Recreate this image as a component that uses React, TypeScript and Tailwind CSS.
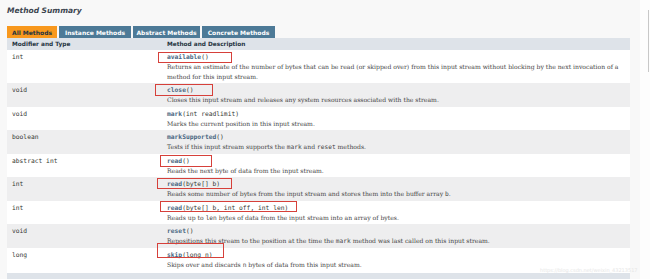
import React from "react";

type Part = string | { c: string };
type Row = { type: string; name: string; params: string; desc: Part[][] };

const rows: Row[] = [
  {
    type: "int",
    name: "available",
    params: "()",
    desc: [
      [
        "Returns an estimate of the number of bytes that can be read (or skipped over) from this input stream without blocking by the next invocation of a",
      ],
      ["method for this input stream."],
    ],
  },
  {
    type: "void",
    name: "close",
    params: "()",
    desc: [["Closes this input stream and releases any system resources associated with the stream."]],
  },
  {
    type: "void",
    name: "mark",
    params: "(int readlimit)",
    desc: [["Marks the current position in this input stream."]],
  },
  {
    type: "boolean",
    name: "markSupported",
    params: "()",
    desc: [["Tests if this input stream supports the ", { c: "mark" }, " and ", { c: "reset" }, " methods."]],
  },
  {
    type: "abstract int",
    name: "read",
    params: "()",
    desc: [["Reads the next byte of data from the input stream."]],
  },
  {
    type: "int",
    name: "read",
    params: "(byte[] b)",
    desc: [["Reads some number of bytes from the input stream and stores them into the buffer array ", { c: "b" }, "."]],
  },
  {
    type: "int",
    name: "read",
    params: "(byte[] b, int off, int len)",
    desc: [["Reads up to ", { c: "len" }, " bytes of data from the input stream into an array of bytes."]],
  },
  {
    type: "void",
    name: "reset",
    params: "()",
    desc: [
      [
        "Repositions this stream to the position at the time the ",
        { c: "mark" },
        " method was last called on this input stream.",
      ],
    ],
  },
  {
    type: "long",
    name: "skip",
    params: "(long n)",
    desc: [["Skips over and discards ", { c: "n" }, " bytes of data from this input stream."]],
  },
];

const mono = "font-['DejaVu_Sans_Mono',monospace]";
const serif = "font-['DejaVu_Serif',serif]";
const sans = "font-['DejaVu_Sans',sans-serif]";

const boxes = [
  { l: 158, t: 52, w: 74, h: 11 },
  { l: 155, t: 84, w: 58, h: 12 },
  { l: 160, t: 155, w: 52, h: 12 },
  { l: 157, t: 178, w: 75, h: 11 },
  { l: 160, t: 201, w: 137, h: 11 },
  { l: 157, t: 243, w: 67, h: 15 },
];

export default function App() {
  return (
    <div className="relative flex w-[650px] h-[279px] overflow-hidden bg-[#f8f8f8]">
      <div className="flex flex-col w-[640px] shrink-0 pl-[7px] pr-[10px] pt-[5px]">
        <div className={`${sans} shrink-0 text-[7.5px] leading-[12px] font-bold italic text-[#3d4650]`}>
          Method Summary
        </div>
        <div className={`${sans} shrink-0 flex gap-[2px] mt-[9px] h-[12px] text-[6px] font-bold`}>
          <div className="w-[50px] bg-[#f8981d] text-[#253441] flex items-center justify-center">All Methods</div>
          <div className="w-[72px] bg-[#4d7a97] text-white flex items-center justify-center">Instance Methods</div>
          <div className="w-[67px] bg-[#4d7a97] text-white flex items-center justify-center">Abstract Methods</div>
          <div className="w-[73px] bg-[#4d7a97] text-white flex items-center justify-center">Concrete Methods</div>
        </div>
        <div className="flex flex-col shrink-0 w-[623px]">
          <div
            className={`${sans} shrink-0 flex h-[12px] items-center bg-[#dee3e9] text-[5.8px] font-bold text-[#253441]`}
          >
            <div className="w-[155px] pl-[5px]">Modifier and Type</div>
            <div className="pl-[5px]">Method and Description</div>
          </div>
          {rows.map((r, i) => (
            <div
              key={i}
              className={`shrink-0 flex pt-[2px] ${i === rows.length - 1 ? "pb-[4px]" : "pb-[2px]"} ${
                i % 2 === 0 ? "bg-white" : "bg-[#eeeeef]"
              }`}
            >
              <div className={`${mono} w-[155px] pl-[5px] text-[6.3px] leading-[10px] text-[#353833]`}>
                {r.type}
              </div>
              <div className="flex flex-col pl-[5px]">
                <div className={`${mono} text-[6.3px] leading-[10px] text-[#353833] whitespace-nowrap`}>
                  <span className="font-bold text-[#4a6782]">{r.name}</span>
                  {r.params}
                </div>
                {r.desc.map((line, j) => (
                  <div
                    key={j}
                    className={`${serif} text-[6.1px] leading-[9.5px] text-[#474747] whitespace-nowrap`}
                  >
                    {line.map((p, k) =>
                      typeof p === "string" ? (
                        <span key={k}>{p}</span>
                      ) : (
                        <span key={k} className={`${mono} text-[6.2px]`}>
                          {p.c}
                        </span>
                      )
                    )}
                  </div>
                ))}
              </div>
            </div>
          ))}
          <div className="shrink-0 h-[10px] bg-[#dee3e9]" />
        </div>
      </div>
      <div className="w-[10px] shrink-0 bg-[#fdfdfd] pt-[10px] pl-[8px]">
        <div className="w-[1px] h-[62px] bg-[#c8c8c8]" />
      </div>
      {boxes.map((b, i) => (
        <div
          key={i}
          className="absolute border-[1.5px] border-[#d6403a]"
          style={{ left: b.l, top: b.t, width: b.w, height: b.h }}
        />
      ))}
      <div className={`${sans} absolute left-[540px] top-[267px] text-[5px] text-[#e6e6e6] whitespace-nowrap`}>
        https://blog.csdn.net/weixin_43213517
      </div>
    </div>
  );
}
